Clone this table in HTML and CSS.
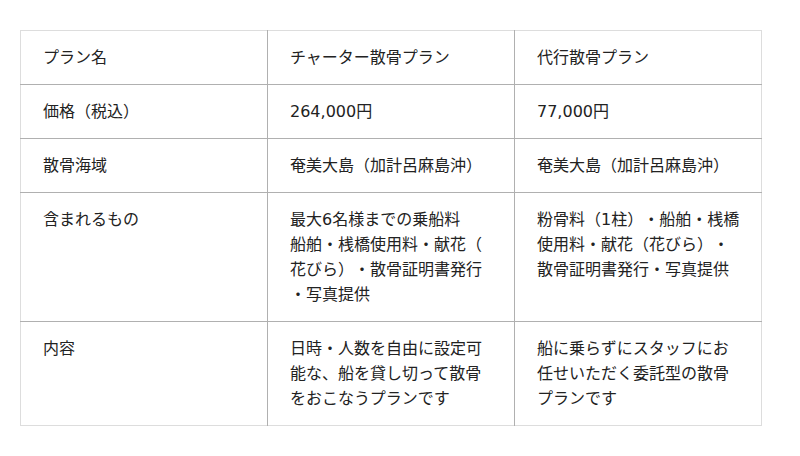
FILE: index.html
```html
<!DOCTYPE html>
<html lang="ja">
<head>
<meta charset="utf-8">
<title>散骨プラン</title>
<link rel="stylesheet" href="styles.css">
</head>
<body>
<main class="page">
  <table class="plans">
    <colgroup><col class="c"><col class="c"><col class="c"></colgroup>
    <tbody>
      <tr><td>プラン名</td><td>チャーター散骨プラン</td><td>代行散骨プラン</td></tr>
      <tr><td>価格（税込）</td><td>264,000円</td><td>77,000円</td></tr>
      <tr><td>散骨海域</td><td>奄美大島（加計呂麻島沖）</td><td>奄美大島（加計呂麻島沖）</td></tr>
      <tr><td>含まれるもの</td><td>最大6名様までの乗船料<br>船舶・桟橋使用料・献花（花びら）・散骨証明書発行・写真提供</td><td>粉骨料（1柱）・船舶・桟橋使用料・献花（花びら）・散骨証明書発行・写真提供</td></tr>
      <tr><td>内容</td><td>日時・人数を自由に設定可能な、船を貸し切って散骨をおこなうプランです</td><td>船に乗らずにスタッフにお任せいただく委託型の散骨プランです</td></tr>
    </tbody>
  </table>
</main>
</body>
</html>
```
FILE: styles.css
```css
html, body {
  margin: 0;
  background: #ffffff;
}
.page {
  padding: 30px 20px;
}
.plans {
  width: 742px;
  table-layout: fixed;
  border-collapse: collapse;
  border: 1px solid #dddddd;
  font-family: "DejaVu Sans", "Noto Sans CJK JP", sans-serif;
  font-size: 16px;
  line-height: 25px;
  color: #222222;
}
.plans td {
  padding: 14px 19px 14px 22px;
  vertical-align: top;
  text-align: left;
  line-break: anywhere;
  text-spacing-trim: space-all;
}
.plans td + td {
  border-left: 1px solid #b0b0b0;
}
.plans tr + tr td {
  border-top: 1px solid #b0b0b0;
}
```
